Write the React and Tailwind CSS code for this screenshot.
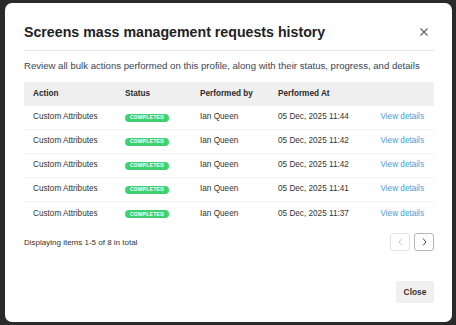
import React from 'react';

const rows = [
  { action: 'Custom Attributes', by: 'Ian Queen', at: '05 Dec, 2025 11:44' },
  { action: 'Custom Attributes', by: 'Ian Queen', at: '05 Dec, 2025 11:42' },
  { action: 'Custom Attributes', by: 'Ian Queen', at: '05 Dec, 2025 11:42' },
  { action: 'Custom Attributes', by: 'Ian Queen', at: '05 Dec, 2025 11:41' },
  { action: 'Custom Attributes', by: 'Ian Queen', at: '05 Dec, 2025 11:37' },
];

const cols = 'grid grid-cols-[101px_75px_78px_1fr_auto] items-center';

const App = () => {
  return (
    <div className="w-[456px] h-[325px] bg-[#2a2a2a] pl-[5px] pr-[4px] pt-[3px] pb-[3px] font-['Liberation_Sans',Arial,sans-serif]">
      <div className="h-full bg-white rounded-[7px] pl-[19px] pr-[18px]">
        <header className="flex items-center justify-between pt-[20px] pb-[9px] border-b border-[#e8e8e8]">
          <h1 className="text-[14.2px] leading-[18px] font-bold text-[#222]">
            Screens mass management requests history
          </h1>
          <button className="text-[#5a5f68] mr-[6px]">
            <svg width="8" height="8" viewBox="0 0 8 8" fill="none" stroke="currentColor" strokeWidth="1.1">
              <path d="M0.5 0.5l7 7M7.5 0.5l-7 7" />
            </svg>
          </button>
        </header>

        <p className="mt-[9px] text-[9.6px] leading-[12px] text-[#3c4452] whitespace-nowrap">
          Review all bulk actions performed on this profile, along with their status, progress, and details
        </p>

        <div className="mt-[10px] text-[8.2px] text-[#333]">
          <div className={`${cols} h-[24px] bg-[#efefef] font-bold text-[#2a2a2a]`}>
            <span className="pl-[9px]">Action</span>
            <span>Status</span>
            <span>Performed by</span>
            <span>Performed At</span>
            <span></span>
          </div>
          {rows.map((r, i) => (
            <div
              key={i}
              className={`${cols} h-[24px] ${i < rows.length - 1 ? 'border-b border-[#f0f0f0]' : ''}`}
            >
              <span className="pl-[9px]">{r.action}</span>
              <span>
                <span className="inline-flex items-center justify-center w-[44px] h-[8px] rounded-full bg-[#3fd16f] text-white text-[5px] leading-none font-bold tracking-[0.3px]">
                  COMPLETED
                </span>
              </span>
              <span>{r.by}</span>
              <span>{r.at}</span>
              <span className="pr-[10px] text-[#3a9fd8]">View details</span>
            </div>
          ))}
        </div>

        <div className="mt-[7px] flex items-center justify-between">
          <span className="text-[8px] text-[#333] pt-[1px]">Displaying items 1-5 of 8 in total</span>
          <div className="flex gap-[4px]">
            <button className="w-[20px] h-[18px] rounded-[3px] border border-[#e2e2e2] flex items-center justify-center text-[#c4c4c4]">
              <svg width="5" height="8" viewBox="0 0 5 8" fill="none" stroke="currentColor" strokeWidth="0.9">
                <path d="M4 0.5L1 4l3 3.5" />
              </svg>
            </button>
            <button className="w-[20px] h-[18px] rounded-[3px] border border-[#b5b5b5] flex items-center justify-center text-[#444]">
              <svg width="5" height="8" viewBox="0 0 5 8" fill="none" stroke="currentColor" strokeWidth="1">
                <path d="M1 0.5L4 4l-3 3.5" />
              </svg>
            </button>
          </div>
        </div>

        <div className="mt-[30px] flex justify-end">
          <button className="w-[38px] h-[22px] rounded-[3px] bg-[#efefef] text-[8.4px] font-bold text-[#333]">
            Close
          </button>
        </div>
      </div>
    </div>
  );
};

export default App;
